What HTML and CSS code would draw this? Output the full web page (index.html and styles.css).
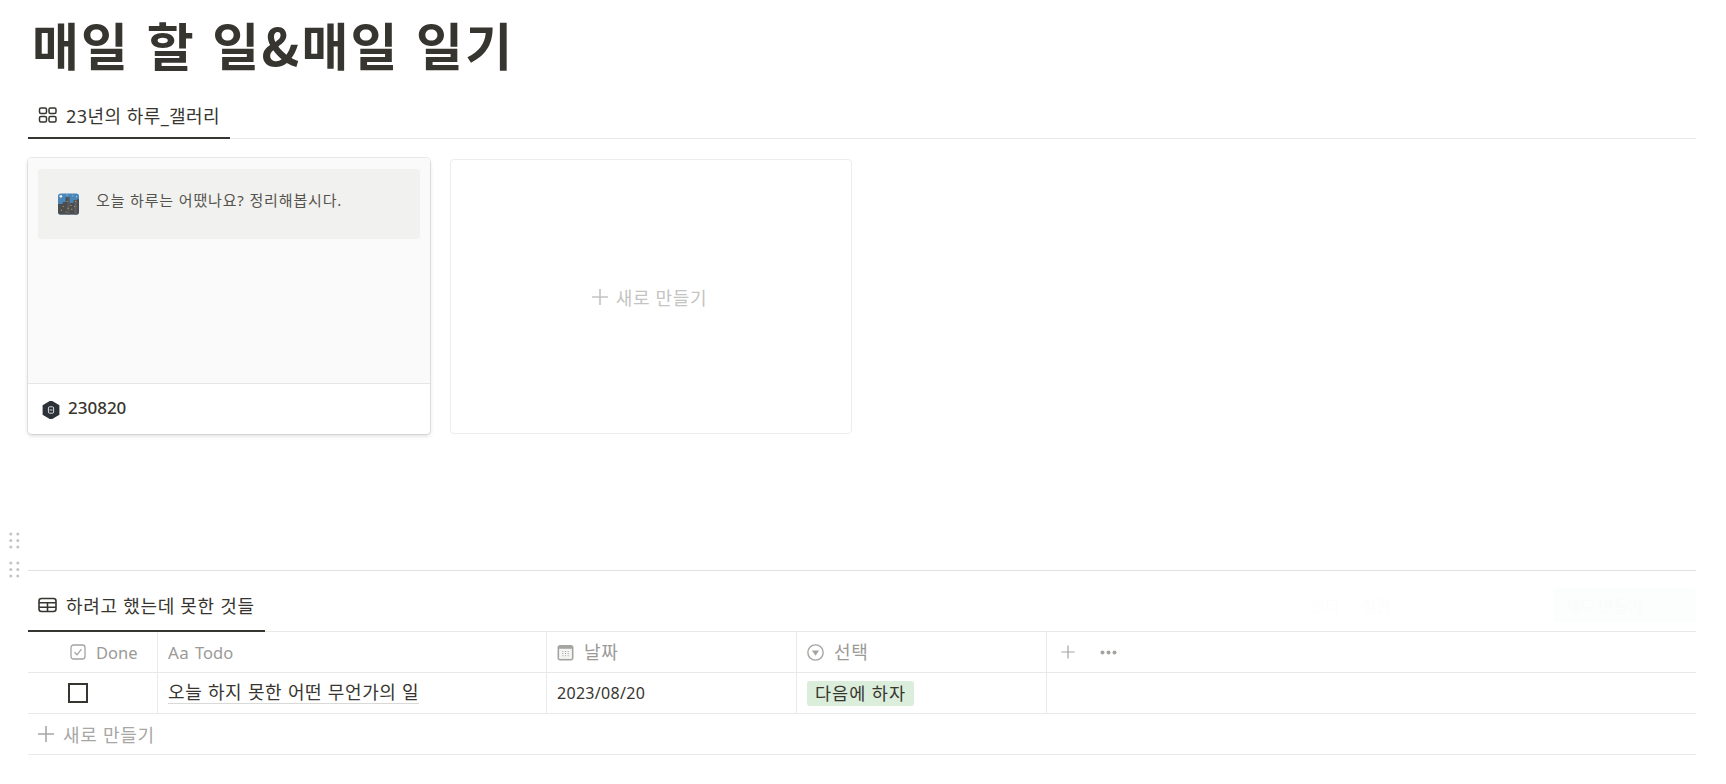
FILE: index.html
```html
<!DOCTYPE html>
<html lang="ko">
<head>
<meta charset="utf-8">
<title>매일 할 일&amp;매일 일기</title>
<link rel="stylesheet" href="styles.css">
</head>
<body>
<main class="page">
  <h1 class="title">매일 할 일&amp;매일 일기</h1>

  <section class="gallery-block">
    <div class="tabbar">
      <div class="tab tab-gallery">
        <svg class="tab-icon" viewBox="0 0 18 16" fill="none" stroke="#37352f" stroke-width="1.5"><rect x="1" y="1" width="7" height="5.5" rx="1.5"/><rect x="10.5" y="1" width="7" height="5.5" rx="1.5"/><rect x="1" y="9.5" width="7" height="5.5" rx="1.5"/><rect x="10.5" y="9.5" width="7" height="5.5" rx="1.5"/></svg>
        <span>23년의 하루_갤러리</span>
      </div>
    </div>
    <div class="cards">
      <article class="card card-filled">
        <div class="preview">
          <div class="callout">
            <svg class="city" viewBox="0 0 22 22"><rect width="22" height="22" rx="3" fill="#4a86b8"/><path d="M0 11h5V9h3V4h4v6h4V7h4V6h2v13a3 3 0 0 1-3 3H3a3 3 0 0 1-3-3z" fill="#4c4d50"/><path d="M10 4h2v18h-2zM17 7h3v15h-3z" fill="#5b5c5f"/><circle cx="3" cy="3" r="1.4" fill="#e8eef3"/><path d="M15 2h1v1h-1zM19 3h1v1h-1zM9 1h1v1H9z" fill="#dce8f0"/><path d="M9 8h1v1H9zM5 13h1v1H5zM3 17h1v1H3zM10 15h1v1h-1zM13 12h1v1h-1zM14 16h1v1h-1zM18 8h1v1h-1zM17 13h1v1h-1zM8 19h1v1H8z" fill="#e6b94c"/></svg>
            <span class="callout-text">오늘 하루는 어땠나요? 정리해봅시다.</span>
          </div>
        </div>
        <div class="card-footer">
          <svg class="badge" viewBox="0 0 18 18"><path d="M9 0.2l7.6 4.4v8.8L9 17.8l-7.6-4.4V4.6z" fill="#2d3238" stroke="#2d3238" stroke-width="1.6" stroke-linejoin="round"/><rect x="6.4" y="5.8" width="5.2" height="6.4" rx="1.2" fill="none" stroke="#d7dadd" stroke-width="1"/><path d="M7.5 9h3" stroke="#d7dadd" stroke-width="1"/></svg>
          <span class="card-name">230820</span>
        </div>
      </article>
      <div class="card card-new">
        <svg class="plus" viewBox="0 0 16 16"><path d="M8 0v16M0 8h16" stroke="currentColor" stroke-width="1.6"/></svg>
        <span class="hangul">새로 만들기</span>
      </div>
    </div>
  </section>

  <section class="table-block">
    <div class="tabbar">
      <div class="tab tab-table">
        <svg class="tab-icon" viewBox="0 0 19 15" fill="none" stroke="#37352f" stroke-width="1.6"><rect x="1" y="1" width="17" height="13" rx="2.5"/><path d="M1 5.3h17M1 9.7h17M9.5 5.3V14"/></svg>
        <span>하려고 했는데 못한 것들</span>
      </div>
      <div class="ghost-actions">
        <span>필터</span><span>정렬</span><span class="ghost-button">새로 만들기</span>
      </div>
    </div>
    <div class="row row-head">
      <div class="cell col-done">
        <svg class="head-icon" viewBox="0 0 16 16" fill="none" stroke="#a5a4a1" stroke-width="1.3"><rect x="1" y="1" width="14" height="14" rx="2.5"/><path d="M4.5 8.2l2.5 2.6 4.5-5.6"/></svg>
        <span class="latin-head">Done</span>
      </div>
      <div class="cell col-todo"><span class="aa">Aa</span><span class="latin-head">Todo</span></div>
      <div class="cell col-date">
        <svg class="head-icon" viewBox="0 0 16 16"><rect x="0.5" y="1" width="15" height="14.5" rx="2.5" fill="#a5a4a1"/><rect x="2" y="4.5" width="12" height="9.5" fill="#f5f5f4"/><path d="M5 7h1M7.5 7h1M10 7h1M5 9h1M7.5 9h1M10 9h1M5 11h1M7.5 11h1M10 11h1" stroke="#a5a4a1" stroke-width="1"/></svg>
        <span class="head-hangul">날짜</span>
      </div>
      <div class="cell col-select">
        <svg class="head-icon" viewBox="0 0 16 16" fill="none"><circle cx="8" cy="8" r="7.2" stroke="#a5a4a1" stroke-width="1.3"/><path d="M4.6 6.2h6.8L8 11z" fill="#a5a4a1"/></svg>
        <span class="head-hangul">선택</span>
      </div>
      <div class="cell col-rest">
        <svg class="add-col" viewBox="0 0 14 14"><path d="M7 0.5v13M0.5 7h13" stroke="#a5a4a1" stroke-width="1.2"/></svg>
        <svg class="more" viewBox="0 0 17 5" fill="#a5a4a1"><circle cx="2.5" cy="2.5" r="2"/><circle cx="8.5" cy="2.5" r="2"/><circle cx="14.5" cy="2.5" r="2"/></svg>
      </div>
    </div>
    <div class="row row-body">
      <div class="cell col-done"><span class="checkbox"></span></div>
      <div class="cell col-todo"><span class="todo-link">오늘 하지 못한 어떤 무언가의 일</span></div>
      <div class="cell col-date date-value">2023/08/20</div>
      <div class="cell col-select"><span class="tag">다음에 하자</span></div>
      <div class="cell col-rest"></div>
    </div>
    <div class="row row-new">
      <svg class="plus" viewBox="0 0 16 16"><path d="M8 0v16M0 8h16" stroke="currentColor" stroke-width="1.6"/></svg>
      <span class="hangul">새로 만들기</span>
    </div>
  </section>
</main>

<svg class="grip grip-one" viewBox="0 0 11 17" fill="#c4c4c4"><circle cx="1.8" cy="2" r="1.5"/><circle cx="8.8" cy="2" r="1.5"/><circle cx="1.8" cy="8.5" r="1.5"/><circle cx="8.8" cy="8.5" r="1.5"/><circle cx="1.8" cy="15" r="1.5"/><circle cx="8.8" cy="15" r="1.5"/></svg>
<svg class="grip grip-two" viewBox="0 0 11 17" fill="#c4c4c4"><circle cx="1.8" cy="2" r="1.5"/><circle cx="8.8" cy="2" r="1.5"/><circle cx="1.8" cy="8.5" r="1.5"/><circle cx="8.8" cy="8.5" r="1.5"/><circle cx="1.8" cy="15" r="1.5"/><circle cx="8.8" cy="15" r="1.5"/></svg>
</body>
</html>
```

FILE: styles.css
```css
* { box-sizing: border-box; }

html, body { margin: 0; height: 784px; overflow: hidden; background: #fff; }

body {
  position: relative;
  font-family: "Noto Sans", "Noto Sans CJK KR", sans-serif;
  color: #37352f;
}

.page { margin-left: 28px; width: 1668px; }

.title {
  margin: 0;
  height: 96px;
  padding: 10px 0 0 4px;
  font-size: 51px;
  line-height: 68px;
  font-weight: 700;
  letter-spacing: 2.2px;
  color: #37352f;
  font-family: "Noto Sans CJK KR", sans-serif;
}

.tabbar {
  display: flex;
  justify-content: space-between;
  border-bottom: 1px solid #e9e9e7;
}

.gallery-block .tabbar { height: 43px; }

.tab {
  display: flex;
  align-items: center;
  gap: 9px;
  margin-bottom: -1px;
  padding: 0 0 4px 10px;
  border-bottom: 2px solid #37352f;
  font-size: 18px;
}

.tab-gallery { width: 202px; letter-spacing: .45px; }
.tab-table { width: 237px; letter-spacing: .7px; }
.tab-icon { width: 19px; height: 16px; flex: none; }

.cards {
  display: flex;
  gap: 20px;
  height: 431px;
  padding-top: 19px;
  align-items: flex-start;
}

.card { width: 402px; height: 276px; border-radius: 4px; }

.card-filled {
  display: flex;
  flex-direction: column;
  overflow: hidden;
  box-shadow: 0 0 0 1px rgba(15, 15, 15, .08), 0 2px 4px rgba(15, 15, 15, .15);
}

.preview {
  flex: none;
  height: 226px;
  padding: 11px 10px 0;
  background: #fafafa;
  border-bottom: 1px solid #e6e6e4;
}

.callout {
  display: flex;
  align-items: flex-start;
  height: 70px;
  padding: 21px 0 0 20px;
  gap: 17px;
  background: #f1f1f0;
  border-radius: 3px;
  font-size: 15px;
  line-height: 20px;
  letter-spacing: .85px;
  color: #55534e;
}

.city { width: 21px; height: 22px; flex: none; margin-top: 3px; }

.card-footer {
  display: flex;
  align-items: center;
  gap: 8px;
  padding: 0 0 0 14px;
  flex: 1;
  margin-top: -3px;
}

.badge { width: 18px; height: 18px; flex: none; margin-top: 4px; }
.card-name { font-size: 17px; font-weight: 500; line-height: 24px; }

.card-new {
  display: flex;
  align-items: center;
  justify-content: center;
  gap: 8px;
  margin-top: 1px;
  height: 275px;
  padding-right: 3px;
  border: 1px solid #ededec;
  font-size: 18px;
  color: #c4c4c2;
}

.hangul { letter-spacing: .7px; }

.plus { width: 16px; height: 16px; flex: none; }

.table-block { border-top: 1px solid #e1e1df; }
.table-block > .tabbar { height: 61px; align-items: flex-end; }
.table-block .tab { height: 44px; padding-bottom: 8px; }

.ghost-actions {
  display: flex;
  align-items: center;
  gap: 22px;
  height: 34px;
  margin-bottom: 9px;
  font-size: 16px;
  color: #fdfdfd;
}

.ghost-button {
  width: 143px;
  height: 34px;
  margin-left: 140px;
  padding: 5px 12px;
  border-radius: 3px;
  background: #fcfdfd;
  color: #fafbfb;
}

.row { display: flex; border-bottom: 1px solid #e9e9e7; height: 41px; }

.cell {
  display: flex;
  align-items: center;
  padding-left: 10px;
  border-right: 1px solid #e9e9e7;
  font-size: 16px;
}

.col-done { width: 130px; flex: none; padding-left: 40px; }
.col-todo { width: 389px; flex: none; }
.col-date { width: 250px; flex: none; }
.col-select { width: 250px; flex: none; }
.col-rest { flex: 1; border-right: 0; padding-left: 14px; }

.date-value { letter-spacing: .3px; }

.row-head .cell { gap: 10px; color: #9b9a97; font-size: 17px; }
.row-head .col-done { gap: 10px; padding-left: 42px; }
.row-head .col-todo { gap: 6px; }
.row-head .col-date .head-icon,
.row-head .col-select .head-icon { width: 17px; height: 17px; }

.latin-head { font-size: 16.5px; }
.head-hangul { font-size: 18px; letter-spacing: .8px; margin-top: -2px; }

.head-icon { width: 16px; height: 16px; flex: none; }
.aa { letter-spacing: .3px; }
.add-col { width: 14px; height: 14px; }
.row-head .col-rest { gap: 25px; }
.more { width: 17px; height: 5px; }

.checkbox { width: 20px; height: 20px; border: 2px solid #37352f; }

.todo-link {
  margin-top: -2px;
  border-bottom: 1px solid #d9d9d7;
  font-size: 18px;
  line-height: 23px;
  letter-spacing: .6px;
  font-family: "Noto Sans CJK KR", sans-serif;
}

.tag {
  display: inline-block;
  padding: 0 8px;
  height: 25px;
  line-height: 25px;
  border-radius: 3px;
  background: #dbeddb;
  font-size: 17.5px;
  letter-spacing: 1px;
}

.row-new {
  align-items: center;
  gap: 9px;
  padding-left: 10px;
  font-size: 18px;
  color: #a8a7a4;
}

.grip { position: absolute; left: 9px; width: 11px; height: 17px; }
.grip-one { top: 532px; }
.grip-two { top: 561px; }
```
